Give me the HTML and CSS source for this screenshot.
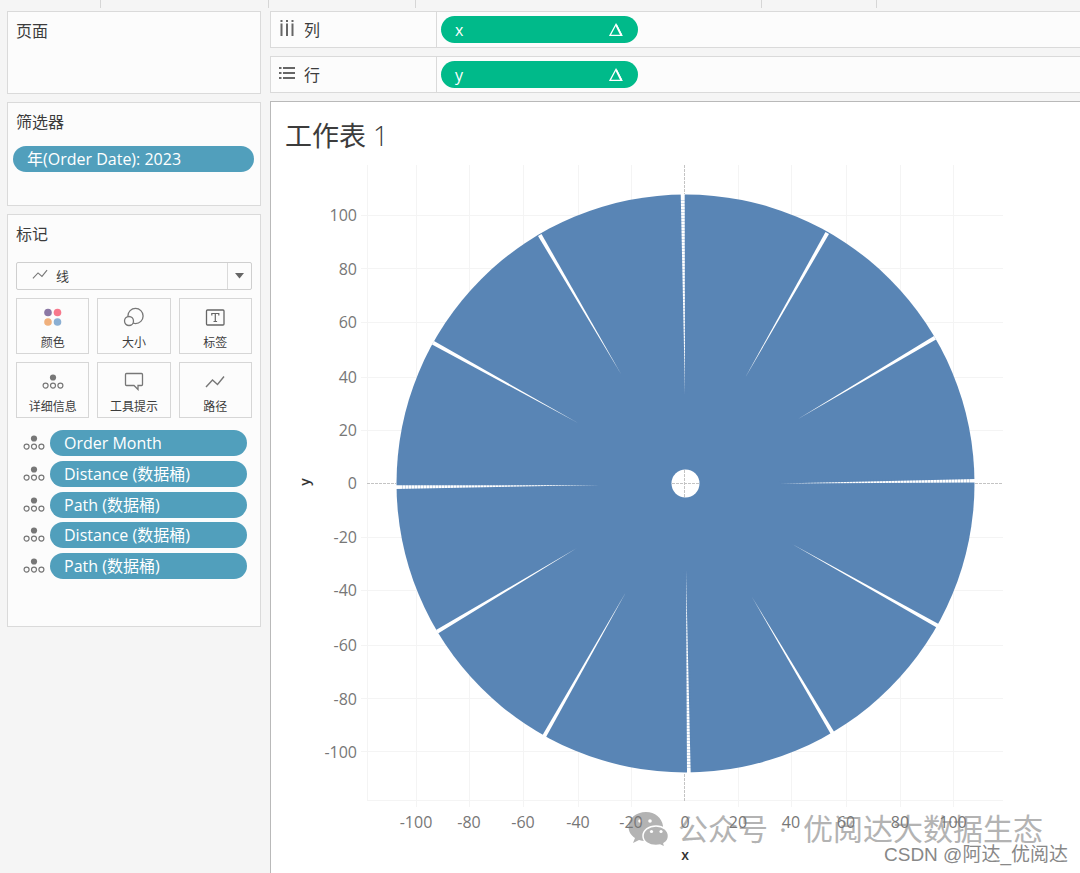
FILE: index.html
```html
<!DOCTYPE html>
<html lang="zh-CN">
<head>
<meta charset="utf-8">
<meta name="viewport" content="width=device-width, initial-scale=1">
<title>工作表 1</title>
<link rel="stylesheet" href="styles.css">
</head>
<body>
<svg class="defs" aria-hidden="true">
  <symbol id="detail" viewBox="0 0 22 16">
    <circle cx="11" cy="3.500" r="3.100" fill="#777"/>
    <g fill="none" stroke="#777" stroke-width="1.200"><circle cx="3.600" cy="11.600" r="2.500"/><circle cx="11" cy="11.600" r="2.500"/><circle cx="18.400" cy="11.600" r="2.500"/></g>
  </symbol>
  <symbol id="line" viewBox="0 0 20 14">
    <path d="M1 12 7.500 5l5 4.500L19 1.500" fill="none" stroke="#777" stroke-width="1.400"/>
  </symbol>
  <symbol id="delta" viewBox="0 0 16 16">
    <path d="M8 2.300 13.800 13.400H2Z" fill="none" stroke="#fff" stroke-width="1.300"/><path d="m8.200 3 5 10" stroke="#fff" stroke-width="1.800"/>
  </symbol>
</svg>
<div class="tabstrip"><span class="seg seg-a"></span><span class="seg seg-b"></span><span class="seg seg-c"></span><span class="seg seg-d"></span><span class="seg seg-e"></span></div>
<div class="workspace">
  <aside class="sidebar">
    <section class="card pages"><h2>页面</h2></section>
    <section class="card filters"><h2>筛选器</h2><button class="pill blue">年(Order Date): 2023</button></section>
    <section class="card marks">
      <h2>标记</h2>
      <div class="mark-type">
        <svg class="type-icon" width="16" height="11"><use href="#line"/></svg>
        <select aria-label="标记"><option>线</option></select>
        <span class="arrow"><svg width="9" height="6"><path d="M0 0h9L4.500 5.500Z" fill="#666"/></svg></span>
      </div>
      <div class="mark-buttons">
        <button><svg width="22" height="20" viewBox="0 0 22 20"><circle cx="6" cy="5.500" r="3.800" fill="#8b78a5"/><circle cx="15.500" cy="5.500" r="3.800" fill="#f7788c"/><circle cx="6" cy="15" r="3.800" fill="#f0b07c"/><circle cx="15.500" cy="15" r="3.800" fill="#8bafd3"/></svg>颜色</button>
        <button><svg width="22" height="20" viewBox="0 0 22 20"><g fill="#fcfcfc" stroke="#777" stroke-width="1.300"><circle cx="12.500" cy="9" r="7.600"/><circle cx="6" cy="14" r="4.500"/></g></svg>大小</button>
        <button><svg width="22" height="20" viewBox="0 0 22 20"><rect x="2.500" y="3" width="17.500" height="15" rx="1" fill="none" stroke="#666" stroke-width="1.300"/><path d="M7.800 8.500V6.500h7v2M11.300 6.500v8M9.500 14.500h3.600" fill="none" stroke="#666" stroke-width="1.200"/></svg>标签</button>
        <button><svg width="22" height="20" viewBox="0 0 22 20"><use href="#detail" y="3" width="22" height="16"/></svg>详细信息</button>
        <button><svg width="22" height="20" viewBox="0 0 22 20"><path d="M3.500 2.500h15q1 0 1 1v10q0 1-1 1H15V18.500L11 14.500H3.500q-1 0-1-1v-10q0-1 1-1Z" fill="none" stroke="#777" stroke-width="1.300"/></svg>工具提示</button>
        <button><svg width="22" height="20" viewBox="0 0 22 20"><use href="#line" x="1" y="4" width="20" height="14"/></svg>路径</button>
      </div>
      <ul class="fields">
        <li><svg width="22" height="16"><use href="#detail"/></svg><button class="pill blue">Order Month</button></li>
        <li><svg width="22" height="16"><use href="#detail"/></svg><button class="pill blue">Distance (数据桶)</button></li>
        <li><svg width="22" height="16"><use href="#detail"/></svg><button class="pill blue">Path (数据桶)</button></li>
        <li><svg width="22" height="16"><use href="#detail"/></svg><button class="pill blue">Distance (数据桶)</button></li>
        <li><svg width="22" height="16"><use href="#detail"/></svg><button class="pill blue">Path (数据桶)</button></li>
      </ul>
    </section>
  </aside>
  <main class="content">
    <div class="shelf"><div class="shelf-name"><svg width="18" height="18" viewBox="0 0 18 18"><path d="M3.500 0v2M9 0v2M14.500 0v2M3.500 3.500V16M9 3.500V16M14.500 3.500V16" stroke="#666" stroke-width="2"/></svg>列</div><button class="pill green">x<svg width="16" height="16"><use href="#delta"/></svg></button></div>
    <div class="shelf"><div class="shelf-name"><svg width="18" height="18" viewBox="0 0 18 18"><path d="M1 3h2.500M1 8h2.500M1 13h2.500M5 3h12M5 8h12M5 13h12" stroke="#666" stroke-width="2.200"/></svg>行</div><button class="pill green">y<svg width="16" height="16"><use href="#delta"/></svg></button></div>
    <section class="sheet">
      <h1>工作表 <span>1</span></h1>
      <svg class="chart" viewBox="271 163 809 709" role="img" aria-label="工作表 1">
        <path class="grid" d="M416.500 165V807M469.500 165V807M523.500 165V807M578.500 165V807M631.500 165V807M738.500 165V807M791.500 165V807M846.500 165V807M900.500 165V807M953.500 165V807M361 215.500H1003M361 268.500H1003M361 322.500H1003M361 377.500H1003M361 430.500H1003M361 537.500H1003M361 590.500H1003M361 645.500H1003M361 698.500H1003M361 751.500H1003M367.500 165V801M367 800.500H1003"/>
        <circle class="disc" cx="685.500" cy="483.500" r="289"/>
        <g fill="#fff">
          <path d="M680.700 193h4L685 395Z"/>
          <path d="m825.500 232 3.500 2L745 378Z"/>
          <path d="m934 336 2 3.500L798 419Z"/>
          <path d="M976 479v3.500L780 483.500Z"/>
          <path d="m937.500 628 2-3.500L792 544Z"/>
          <path d="m831 734.500 3.500-2L752 597Z"/>
          <path d="M687 774h3.700L686 570Z"/>
          <path d="m542 736 3.500 2L626 592Z"/>
          <path d="m436 630 2 3.500L577 548Z"/>
          <path d="M395 485.300v3.700L600 485Z"/>
          <path d="m434 341-2 3.500L578 423Z"/>
          <path d="m541.500 234-3.500 2L621 374Z"/>
          <circle cx="685.500" cy="483.500" r="14"/>
        </g>
        <path class="texture" d="M682.500 200 685 395M970 481 780 483.500M689 768 686 570M402 487 600 485"/>
        <path class="axis" d="M684.500 165V194M684.500 774V801M367 483.500H396M975 483.500H1003M684.500 470V498M672 483.500H699"/>
        <g class="watermark">
          <path d="M646 812c-10 0-17.500 6.500-17.500 14.500 0 5 2.500 9 6.500 11.500l-2 5 6-3q3 1 6 1h3c5-1 16-9 15-15-1-8-8-14-17-14Z"/>
          <path d="M656 826c-7.500 0-13 4.500-13 10s5.500 9.500 13 9.500l4-.500 5 2.500-1-4c3-1.700 4.500-4.500 4.500-7.500 0-5.500-5-10-12.500-10Z" stroke="#fff" stroke-width="1.500"/>
          <g fill="#fff"><circle cx="640" cy="821" r="1.800"/><circle cx="650" cy="821" r="1.800"/><circle cx="651.500" cy="831.500" r="1.600"/><circle cx="661" cy="831.500" r="1.600"/></g>
          <text x="678" y="840">公众号</text><text x="779" y="840">·</text><text x="803" y="840">优阅达大数据生态</text>
        </g>
        <g class="labels end"><text x="357" y="221">100</text><text x="357" y="275">80</text><text x="357" y="328">60</text><text x="357" y="383">40</text><text x="357" y="436">20</text><text x="357" y="489">0</text><text x="357" y="543">-20</text><text x="357" y="596">-40</text><text x="357" y="651">-60</text><text x="357" y="705">-80</text><text x="357" y="758">-100</text></g>
        <g class="labels middle"><text x="416" y="828">-100</text><text x="469" y="828">-80</text><text x="523" y="828">-60</text><text x="578" y="828">-40</text><text x="631" y="828">-20</text><text x="685" y="828">0</text><text x="738" y="828">20</text><text x="791" y="828">40</text><text x="846" y="828">60</text><text x="900" y="828">80</text><text x="953" y="828">100</text></g>
        <text class="axis-name" x="685" y="860">x</text>
        <text class="axis-name" transform="translate(310 482) rotate(-90)">y</text>
        <text class="credit" x="884" y="861">CSDN @阿达_优阅达</text>
      </svg>
    </section>
  </main>
</div>
</body>
</html>
```
FILE: styles.css
```css
* { box-sizing: border-box; }
body {
  margin: 0;
  min-height: 100vh;
  display: flex;
  flex-direction: column;
  background: #f5f5f5;
  color: #3c3c3c;
  font-family: "Open Sans", "Noto Sans CJK SC", sans-serif;
  font-size: 16px;
}
button, select { font: inherit; color: inherit; margin: 0; }
.defs { display: none; }
.tabstrip { display: flex; height: 8px; margin-bottom: 3px; }
.seg { border-right: 1px solid #d6d6d6; }
.seg-a { width: 101px; }
.seg-b { width: 168px; }
.seg-c { width: 147px; }
.seg-d { width: 346px; }
.seg-e { width: 115px; }
.workspace { flex: 1; display: flex; gap: 9px; padding-left: 7px; }
.sidebar { width: 254px; flex: none; display: flex; flex-direction: column; gap: 8px; }
.card { border: 1px solid #dadada; background: #fcfcfc; padding: 8px; }
.card h2 { margin: 0; font-size: 16px; line-height: 22px; font-weight: 400; }
.pages { min-height: 83px; }
.filters { min-height: 104px; padding: 8px 6px 8px 5px; }
.filters h2 { padding-left: 3px; }
.filters .pill { margin-top: 13px; }
.marks { min-height: 413px; }
.pill {
  display: flex;
  align-items: center;
  width: 100%;
  height: 26px;
  border: 0;
  border-radius: 13px;
  padding: 0 14px;
  color: #fff;
  line-height: 24px;
  text-align: left;
}
.blue { background: #519fbc; }
.green { background: #00ba8a; width: 197px; height: 27px; border-radius: 14px; justify-content: space-between; }
.mark-type {
  display: flex;
  align-items: center;
  position: relative;
  height: 28px;
  margin-top: 17px;
  border: 1px solid #cfcfcf;
  border-radius: 2px;
}
.type-icon { position: absolute; left: 15px; top: 6px; pointer-events: none; }
.mark-type select {
  flex: 1;
  height: 26px;
  padding: 0 0 0 39px;
  border: 0;
  background: none;
  appearance: none;
  font-size: 13px;
}
.arrow {
  width: 24px;
  height: 26px;
  display: flex;
  align-items: center;
  justify-content: center;
  border-left: 1px solid #dadada;
}
.mark-buttons { display: grid; grid-template-columns: repeat(3, 1fr); gap: 8px; margin-top: 8px; }
.mark-buttons button {
  display: flex;
  flex-direction: column;
  align-items: center;
  gap: 6px;
  height: 56px;
  padding: 8px 0 0;
  border: 1px solid #d6d6d6;
  background: #fcfcfc;
  font-size: 12px;
  line-height: 20px;
}
.mark-buttons svg { flex: none; }
.fields {
  list-style: none;
  margin: 12px 5px 0 7px;
  padding: 0;
  height: 149px;
  display: flex;
  flex-direction: column;
  justify-content: space-between;
}
.fields li { display: flex; align-items: center; gap: 5px; }
.fields svg { flex: none; }
.content { flex: 1; min-width: 0; display: flex; flex-direction: column; gap: 8px; }
.shelf {
  display: flex;
  align-items: center;
  height: 37px;
  border: 1px solid #dadada;
  border-right: 0;
  background: #fcfcfc;
  gap: 4px;
}
.shelf-name {
  width: 166px;
  height: 35px;
  display: flex;
  align-items: center;
  gap: 8px;
  padding: 0 0 2px 7px;
  border-right: 1px solid #dadada;
}
.sheet { flex: 1; border: 1px solid #b9b9b9; border-right: 0; border-bottom: 0; background: #fff; }
.sheet h1 {
  margin: 0;
  padding: 14px 14px 7px;
  font-size: 27px;
  line-height: 40px;
  font-weight: 400;
}
.sheet h1 span { font-weight: 300; }
.chart { display: block; width: 100%; }
.grid { stroke: #f4f4f4; }
.disc { fill: #5985b5; }
.texture { stroke: #5985b5; stroke-width: 5; stroke-opacity: 0.3; stroke-dasharray: 1 2; }
.axis { stroke: #c4c4c4; stroke-dasharray: 3 1; }
.labels { fill: #777; font-size: 16px; }
.end { text-anchor: end; }
.middle { text-anchor: middle; }
.axis-name { fill: #333; font-size: 14px; font-weight: 600; text-anchor: middle; }
.watermark { fill: #b3b3b3; font-size: 30px; }
.credit {
  fill: #888;
  font-family: "Liberation Sans", "Noto Sans CJK SC", sans-serif;
  font-size: 19px;
}
```
